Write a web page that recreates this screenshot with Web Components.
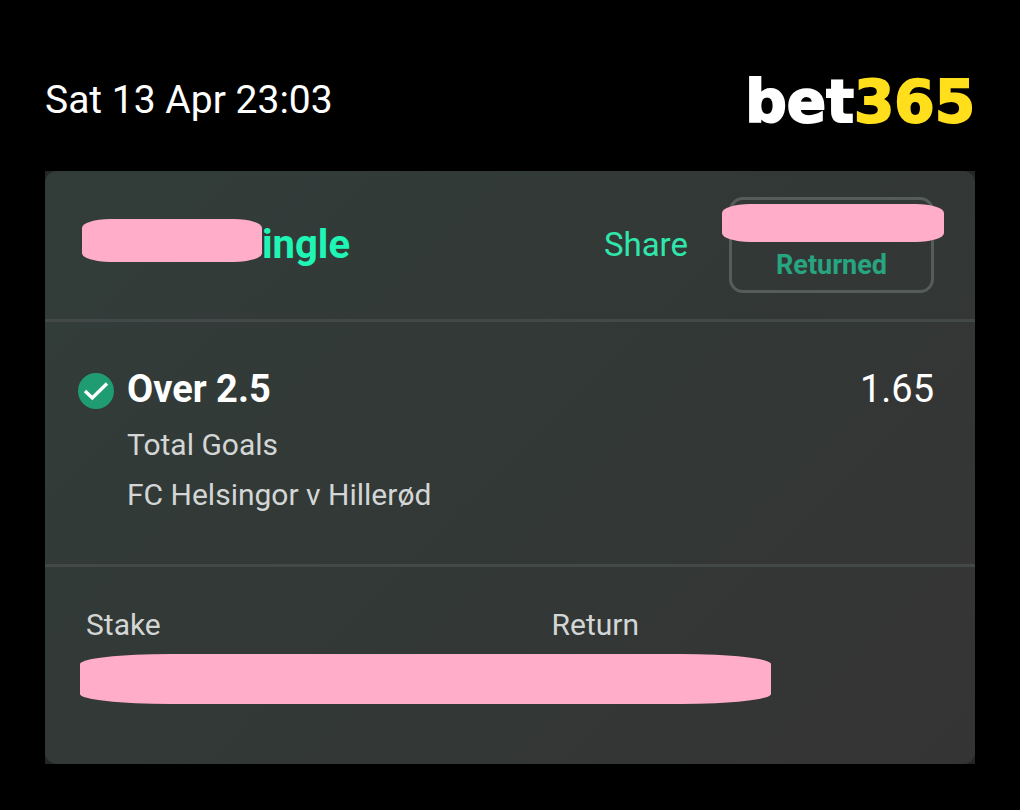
<!DOCTYPE html>
<html lang="en">
<head>
<meta charset="utf-8">
<title>bet365 – Bet slip</title>
<style>
  html { background: #000; }
  body { margin: 0; font-family: Roboto, "Liberation Sans", sans-serif; color: #fff; }
</style>
</head>
<body>
<bet-page>
  <page-header slot="header" date="Sat 13 Apr 23:03"></page-header>
  <bet-card>
    <bet-summary></bet-summary>
    <bet-selection odds="1.65">
      Over 2.5
      <span slot="market">Total Goals</span>
      <span slot="fixture">FC Helsingor v Hillerød</span>
    </bet-selection>
    <bet-totals>
      <span slot="stake">Stake</span>
      <span slot="return">Return</span>
    </bet-totals>
  </bet-card>
</bet-page>

<script>
class ShadowElement extends HTMLElement {
  constructor() {
    super();
    this.attachShadow({ mode: "open" });
  }
  connectedCallback() {
    this.shadowRoot.innerHTML = this.render();
  }
}

customElements.define("bet-page", class extends ShadowElement {
  render() {
    return `
      <style>
        :host { display: block; padding: 0 45px 45px; }
      </style>
      <slot name="header"></slot>
      <main><slot></slot></main>`;
  }
});

customElements.define("brand-logo", class extends ShadowElement {
  render() {
    return `
      <style>
        :host { display: block; font: 700 58px/68px "DejaVu Sans", "Noto Sans", sans-serif; }
        a { color: #fff; text-decoration: none; -webkit-text-stroke: 2px currentColor; }
        span { color: #ffdf1b; }
      </style>
      <a href="#">bet<span>365</span></a>`;
  }
});

customElements.define("page-header", class extends ShadowElement {
  render() {
    return `
      <style>
        :host { display: block; }
        header { display: flex; justify-content: space-between; align-items: flex-start; padding: 68px 0 35px; }
        time { font-size: 39px; line-height: 64px; }
      </style>
      <header>
        <time datetime="04-13T23:03">${this.getAttribute("date")}</time>
        <brand-logo></brand-logo>
      </header>`;
  }
});

customElements.define("bet-card", class extends ShadowElement {
  render() {
    return `
      <style>
        :host { display: block; background: #222726; }
        article { border-radius: 12px; background: linear-gradient(135deg, #323d3a 0%, #323836 50%, #353434 100%); }
      </style>
      <article><slot></slot></article>`;
  }
});

/* Solid bar that hides private text */
customElements.define("redaction-bar", class extends ShadowElement {
  render() {
    return `
      <style>
        :host { display: block; background: #ffadc9; border-radius: 28px / 9px; }
      </style>`;
  }
});

customElements.define("bet-summary", class extends ShadowElement {
  render() {
    return `
      <style>
        :host { display: block; border-bottom: 3px solid #434948; }
        section { display: flex; align-items: center; padding: 26px 41px 26px 37px; }
        h1 { display: flex; align-items: flex-start; margin: 0 auto 0 0; font-size: 40px; line-height: 52px; font-weight: 700; color: #1ff5b5; }
        h1 redaction-bar { width: 180px; height: 43px; }
        button { font-family: inherit; background: none; cursor: pointer; }
        .share { border: 0; padding: 0; margin-right: 41px; font-size: 33px; line-height: 40px; color: #2fe6ab; }
        .returned { position: relative; box-sizing: border-box; width: 205px; height: 96px; border: 3px solid #565c5a; border-radius: 14px;
          padding: 40px 0 0; font-size: 27px; line-height: 40px; font-weight: 700; color: #27a580; }
        .returned redaction-bar { position: absolute; top: 4px; left: -10px; right: -13px; height: 38px; }
      </style>
      <section>
        <h1><redaction-bar></redaction-bar>ingle</h1>
        <button class="share" type="button">Share</button>
        <button class="returned" type="button"><redaction-bar></redaction-bar>Returned</button>
      </section>`;
  }
});

customElements.define("bet-selection", class extends ShadowElement {
  render() {
    return `
      <style>
        :host { display: block; border-bottom: 3px solid #434948; }
        section { display: grid; grid-template-columns: 36px 1fr auto; column-gap: 13px; align-items: center; padding: 41px 41px 44px 33px; }
        svg { display: block; margin-top: 4px; }
        h2, p { margin: 0; }
        h2, .odds { font-size: 38px; line-height: 52px; }
        h2 { font-weight: 700; }
        .details { grid-column: 2 / 4; padding-top: 5px; font-size: 30px; line-height: 50px; color: #d3d6d5; }
      </style>
      <section>
        <svg width="36" height="36" viewBox="0 0 36 36" role="img" aria-label="Won">
          <circle cx="18" cy="18" r="18" fill="#1f9c72"/>
          <path d="M7 18 L14.3 25 L29 10.5" fill="none" stroke="#fff" stroke-width="3.4"/>
        </svg>
        <h2><slot></slot></h2>
        <p class="odds">${this.getAttribute("odds")}</p>
        <div class="details">
          <p><slot name="market"></slot></p>
          <p><slot name="fixture"></slot></p>
        </div>
      </section>`;
  }
});

customElements.define("bet-totals", class extends ShadowElement {
  render() {
    return `
      <style>
        :host { display: block; }
        section { padding: 38px 0 60px; font-size: 30px; line-height: 40px; color: #d3d6d5; }
        .labels { display: grid; grid-template-columns: 1fr 1fr; padding-left: 41px; }
        .labels > div:last-child { padding-left: 21px; }
        redaction-bar { height: 50px; margin: 9px 204px 0 35px; border-radius: 90px / 10px; }
      </style>
      <section>
        <div class="labels">
          <div><slot name="stake"></slot></div>
          <div><slot name="return"></slot></div>
        </div>
        <redaction-bar></redaction-bar>
      </section>`;
  }
});
</script>
</body>
</html>
